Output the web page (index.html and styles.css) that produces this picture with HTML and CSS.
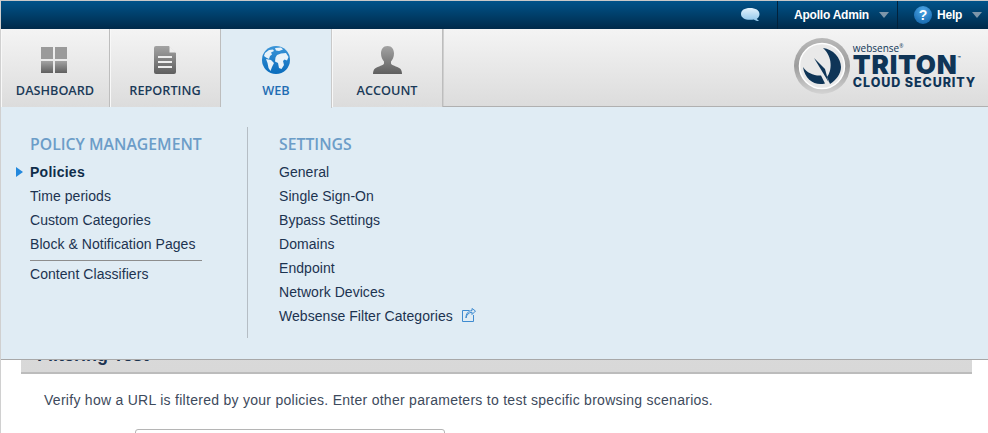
FILE: index.html
```html
<!DOCTYPE html>
<html lang="en">
<head>
<meta charset="utf-8">
<title>Triton Cloud Security</title>
<link rel="stylesheet" href="styles.css">
</head>
<body>
<div class="page">
  <header class="topbar">
    <div class="top-cell top-chat">
      <svg class="chat-icon" width="22" height="16" viewBox="0 0 22 16"><defs><linearGradient id="chatg" x1="0" y1="0" x2="0" y2="1"><stop offset="0" stop-color="#e2f2fc"/><stop offset="1" stop-color="#8fc6ea"/></linearGradient></defs><path d="M10 1C15.500 1 19.500 3.200 19.500 7C19.500 9.200 18.500 10.800 16.800 11.700C17.300 12.700 18.200 13.500 19.200 14C17 14.200 15 13.500 13.800 12.500C12.800 12.700 11.500 12.800 10 12.800C4.500 12.800 1 10.500 1 7C1 3.200 4.500 1 10 1Z" fill="url(#chatg)"/></svg>
    </div>
    <div class="top-cell top-user">
      <span class="top-label">Apollo Admin</span><span class="caret"></span>
    </div>
    <div class="top-cell top-help">
      <span class="help-badge">?</span><span class="top-label">Help</span><span class="caret"></span>
    </div>
  </header>

  <nav class="mainnav">
    <a class="tab">
      <svg class="tab-icon icon-grid" width="26" height="26" viewBox="0 0 26 26"><defs><linearGradient id="grayg" x1="0" y1="0" x2="0" y2="1"><stop offset="0" stop-color="#a3a3a3"/><stop offset="1" stop-color="#5f5f5f"/></linearGradient></defs><rect x="0" y="0" width="12" height="12" fill="#9a9a9a"/><rect x="14" y="0" width="12" height="12" fill="#9a9a9a"/><rect x="0" y="14" width="12" height="12" fill="url(#grayg)"/><rect x="14" y="14" width="12" height="12" fill="url(#grayg)"/></svg>
      <span class="tab-label">DASHBOARD</span>
    </a>
    <a class="tab">
      <svg class="tab-icon" width="22" height="28" viewBox="0 0 22 28"><path d="M2 0H15L22 7V26Q22 28 20 28H2Q0 28 0 26V2Q0 0 2 0Z" fill="url(#grayg)"/><path d="M15.500 0L22 6.500H15.500Z" fill="#eee"/><rect x="4" y="10" width="14" height="2" fill="#eee"/><rect x="4" y="15" width="14" height="2" fill="#eee"/><rect x="4" y="20" width="14" height="2" fill="#eee"/></svg>
      <span class="tab-label">REPORTING</span>
    </a>
    <a class="tab tab-active">
      <svg class="tab-icon" width="28" height="28" viewBox="0 0 28 28"><defs><linearGradient id="globeg" x1="0" y1="0" x2="0" y2="1"><stop offset="0" stop-color="#3b95d8"/><stop offset="1" stop-color="#0a6cbc"/></linearGradient></defs><circle cx="14" cy="14" r="14" fill="url(#globeg)"/><path d="M3 7L7 4L11 3.500L12 5L9 6.500L10 8.500L8 10L7 13L4 11.500L2 10Z M4 13L9 14L12 17L10 21L8.500 25L6.500 22L5.500 17Z M13 2L19 1.500L21 3.500L17 5L14 4.500Z M15 9L19 7.500L24 7L26.500 11L25 14.500L22.500 13.500L21 15L22 19L19.500 23L17 22L16 17L13 15.500L13.500 11.500Z" fill="#e8f2f9"/></svg>
      <span class="tab-label">WEB</span>
    </a>
    <a class="tab">
      <svg class="tab-icon" width="29" height="28" viewBox="0 0 29 28"><path d="M14.500 0C19 0 21 3.500 21 7.500C21 11 19.500 14 18 15.500V17.500C18 19 24 20.500 27 22.500C28.500 23.500 29 26 29 28H0C0 26 .5 23.500 2 22.500C5 20.500 11 19 11 17.500V15.500C9.500 14 8 11 8 7.500C8 3.500 10 0 14.500 0Z" fill="url(#grayg)"/></svg>
      <span class="tab-label">ACCOUNT</span>
    </a>
    <div class="tab-stub"></div>
    <div class="brand">
      <svg class="brand-mark" width="58" height="58" viewBox="0 0 58 58"><defs><linearGradient id="ringg" x1="0" y1="0" x2="0" y2="1"><stop offset="0" stop-color="#b9b9b9"/><stop offset=".5" stop-color="#9c9c9c"/><stop offset="1" stop-color="#d4d4d4"/></linearGradient></defs><circle cx="29" cy="29" r="28" fill="url(#ringg)"/><circle cx="29" cy="29" r="22.500" fill="#e9e9e9" stroke="#fff" stroke-width="1.500"/><path d="M30 11C40 12 48 21 48 30C48 37 43 43 37 47L34 40C39 34 40 20 30 11Z" fill="#0f3557"/><path d="M10 30C14 36 21 39 28 38.500L32 46.500C22 49 12 43 10 30Z" fill="#0f3557"/><path d="M21 21L32 32L35.500 45Z" fill="#0f3557"/></svg>
      <div class="brand-text">
        <span class="brand-small">websense<sup>®</sup></span>
        <span class="brand-big">TRITON<sup>™</sup></span>
        <span class="brand-sub">CLOUD SECURITY</span>
      </div>
    </div>
  </nav>

  <main class="content">
    <h2 class="section-head">Filtering Test</h2>
    <p class="section-intro">Verify how a URL is filtered by your policies. Enter other parameters to test specific browsing scenarios.</p>
    <div class="url-input"></div>
  </main>

  <section class="flyout">
    <div class="fly-col fly-col-left">
      <h3 class="fly-head">POLICY MANAGEMENT</h3>
      <ul class="fly-list">
        <li class="fly-item fly-current">Policies</li>
        <li class="fly-item">Time periods</li>
        <li class="fly-item">Custom Categories</li>
        <li class="fly-item fly-rule">Block &amp; Notification Pages</li>
        <li class="fly-item">Content Classifiers</li>
      </ul>
    </div>
    <div class="fly-col fly-col-right">
      <h3 class="fly-head">SETTINGS</h3>
      <ul class="fly-list">
        <li class="fly-item">General</li>
        <li class="fly-item">Single Sign-On</li>
        <li class="fly-item">Bypass Settings</li>
        <li class="fly-item">Domains</li>
        <li class="fly-item">Endpoint</li>
        <li class="fly-item">Network Devices</li>
        <li class="fly-item">Websense Filter Categories
          <svg class="ext-icon" width="14" height="14" viewBox="0 0 14 14" fill="none" stroke="#3f8bd0" stroke-width="1"><path d="M7.500 2.500H.5V13.500H11.500V7"/><path d="M4 10C4.500 7 6.500 4.500 10 4.200V6.500L13.500 3L10 .5V2.500C6 3 3.800 6 4 10Z" fill="#e0ecf4"/></svg>
        </li>
      </ul>
    </div>
  </section>
</div>
</body>
</html>
```

FILE: styles.css
```css
* { box-sizing: border-box; }
html, body { margin: 0; padding: 0; background: #fff; }
body { font-family: "Liberation Sans", Arial, sans-serif; color: #1c3350; overflow: hidden; }
.page { position: relative; width: 988px; height: 433px; overflow: hidden; border-left: 1px solid #d0d0d0; border-top: 1px solid #c8c8c8; }

.topbar { display: flex; justify-content: flex-end; height: 28px; background: linear-gradient(#00538a, #002a4a); }
.top-cell { display: flex; align-items: center; height: 28px; }
.top-chat { width: 46px; padding-left: 8px; border-right: 1px solid #02223b; }
.top-user { width: 120px; padding-left: 16px; border-right: 1px solid #02223b; }
.top-help { width: 90px; padding-left: 16px; }
.top-label { color: #fff; font-size: 12px; font-weight: 700; letter-spacing: -.22px; }
.caret { width: 0; height: 0; margin-left: 10px; border-left: 5.500px solid transparent; border-right: 5.500px solid transparent; border-top: 6px solid #7d96aa; }
.help-badge { display: block; width: 18px; height: 18px; margin-right: 5px; border-radius: 50%; background: radial-gradient(circle at 50% 25%, #4ea6e6, #0c5fa6); color: #fff; font-size: 14px; font-weight: 700; line-height: 18px; text-align: center; }

.mainnav { display: flex; height: 78px; background: linear-gradient(#f4f4f4, #dcdcdc); border-bottom: 1px solid #b0b0b0; }
.tab { display: flex; flex-direction: column; align-items: center; width: 111px; height: 78px; padding-top: 17px; background: linear-gradient(#f4f4f4, #dcdcdc); border-right: 1px solid #bdbdbd; box-shadow: inset 1px 0 0 #f8f8f8; }
.tab:first-child { width: 109px; }
.tab-icon { display: block; height: 28px; margin-bottom: 7px; }
.icon-grid { height: 26px; margin: 1px 2px 8px 0; }
.tab-label { font-family: "Open Sans", sans-serif; font-size: 12.700px; font-weight: 600; line-height: 18px; color: #1b3a58; }
.tab-active { height: 79px; background: #e0ecf4; border-right: 1px solid #c9c9c9; position: relative; z-index: 2; box-shadow: none; }
.tab-active .tab-label { color: #1f6db3; }
.tab-stub { width: 1px; height: 77px; background: #cfcfcf; }

.brand { display: flex; align-items: flex-start; margin-left: auto; padding: 8px 12px 0 0; }
.brand-mark { display: block; margin-right: 2px; }
.brand-text { display: flex; flex-direction: column; color: #0f3557; padding-top: 6px; }
.brand-small { font-family: "Open Sans", sans-serif; font-size: 10px; line-height: 10px; }
.brand-small sup { font-size: 5px; line-height: 0; }
.brand-big { margin-top: 1px; font-family: "Inter", sans-serif; font-weight: 900; font-size: 26px; line-height: 22px; letter-spacing: .8px; white-space: nowrap; }
.brand-big sup { font-size: 5px; line-height: 0; vertical-align: 14px; font-weight: 700; letter-spacing: 0; }
.brand-sub { margin-top: 1px; font-family: "Inter", sans-serif; font-weight: 800; font-size: 12.500px; line-height: 12px; letter-spacing: .9px; white-space: nowrap; }

.content { margin: 0 16px 0 20px; }
.section-head { height: 267px; margin: 0; padding: 238px 0 0 16px; background: linear-gradient(#e4e4e4, #d8d8d8); border-bottom: 2px solid #bcbcbc; font-size: 18px; font-weight: 700; line-height: 21px; color: #1c3350; }
.section-intro { margin: 17px 0 0 23px; font-size: 14px; line-height: 18px; letter-spacing: .275px; color: #3d4a5c; white-space: nowrap; }
.url-input { width: 310px; height: 30px; margin: 20px 0 0 114px; border: 1px solid #b5b5b5; border-radius: 3px; background: #fff; }

.flyout { position: absolute; left: 0; top: 106px; z-index: 1; display: flex; width: 987px; height: 253px; padding-top: 20px; background: #e0ecf4; border-bottom: 1px solid #a8a8a8; }
.fly-col { height: 211px; padding-top: 8px; }
.fly-col-left { width: 247px; padding-right: 45px; padding-left: 29px; border-right: 1px solid #b5bdc4; }
.fly-col-right { padding-left: 31px; }
.fly-head { margin: 0 0 7px; font-family: "Open Sans", sans-serif; font-size: 15.800px; font-weight: 600; line-height: 18px; color: #6c9dc8; white-space: nowrap; }
.fly-list { margin: 0; padding: 0; list-style: none; }
.fly-item { font-size: 14px; line-height: 24px; letter-spacing: .05px; color: #1c3350; white-space: nowrap; }
.fly-current { position: relative; font-weight: 700; letter-spacing: .25px; color: #0f2d4a; }
.fly-current::before { content: ""; position: absolute; left: -14px; top: 7px; border-left: 7px solid #2288dd; border-top: 5px solid transparent; border-bottom: 5px solid transparent; }
.fly-rule { height: 29px; padding-bottom: 5px; border-bottom: 1px solid #8d8d8d; }
.fly-rule + .fly-item { margin-top: 1px; }
.ext-icon { margin-left: 5px; vertical-align: -1px; }
```
